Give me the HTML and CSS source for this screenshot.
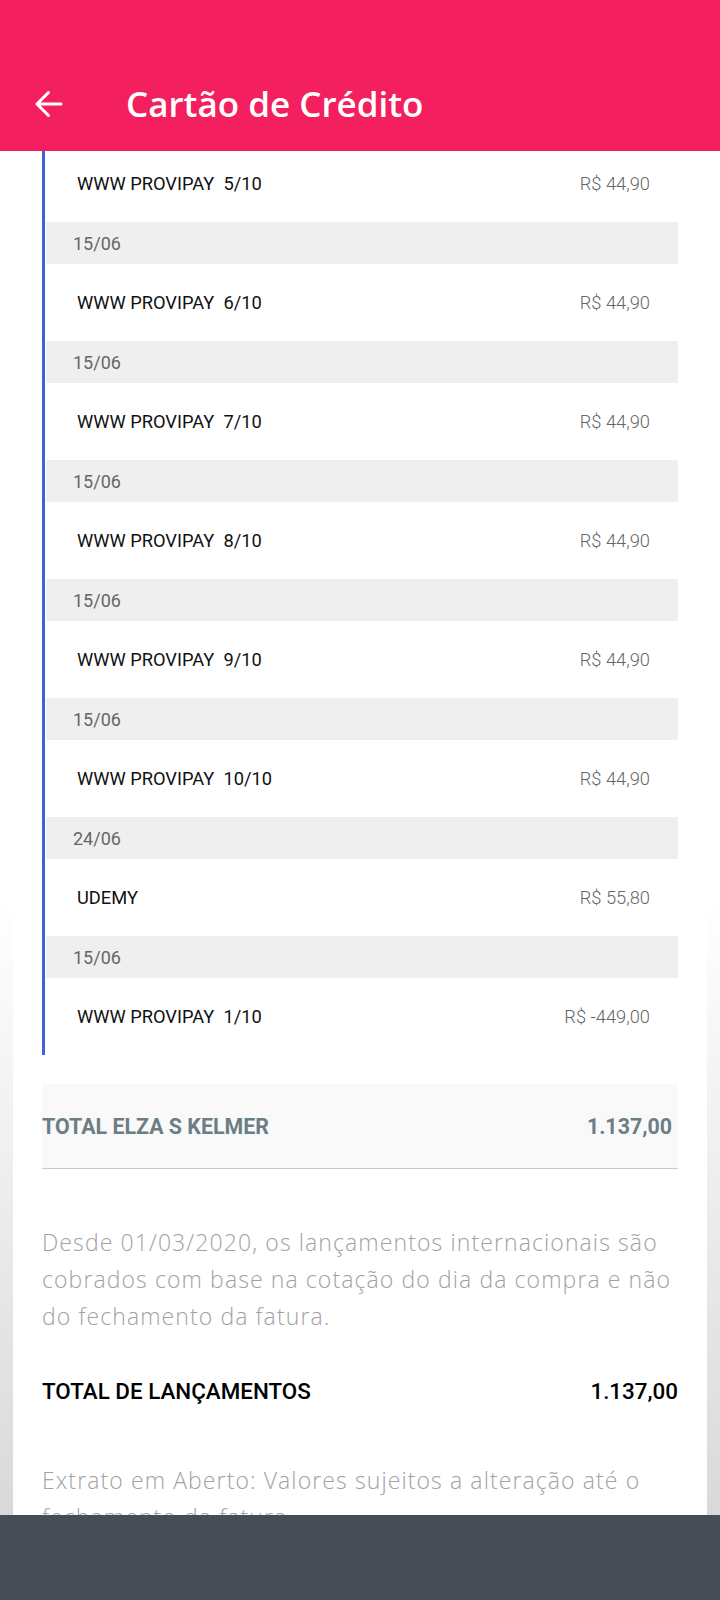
FILE: index.html
```html
<!DOCTYPE html>
<html lang="pt-BR">
<head>
<meta charset="utf-8">
<title>Cartão de Crédito</title>
<link rel="stylesheet" href="styles.css">
</head>
<body>
<header class="appbar">
  <div class="toolbar">
    <svg class="back" width="30" height="30" viewBox="0 0 30 30" aria-hidden="true">
      <path d="M27 15H3M14.5 3.5L3 15l11.5 11.5" fill="none" stroke="#fff" stroke-width="3" stroke-linecap="round" stroke-linejoin="round"/>
    </svg>
    <h1 class="title">Cartão de Crédito</h1>
  </div>
</header>
<main class="card">
  <ul class="list">
    <li class="item"><span class="desc">WWW PROVIPAY  5/10</span><span class="amount">R$ 44,90</span></li>
    <li class="date">15/06</li>
    <li class="item"><span class="desc">WWW PROVIPAY  6/10</span><span class="amount">R$ 44,90</span></li>
    <li class="date">15/06</li>
    <li class="item"><span class="desc">WWW PROVIPAY  7/10</span><span class="amount">R$ 44,90</span></li>
    <li class="date">15/06</li>
    <li class="item"><span class="desc">WWW PROVIPAY  8/10</span><span class="amount">R$ 44,90</span></li>
    <li class="date">15/06</li>
    <li class="item"><span class="desc">WWW PROVIPAY  9/10</span><span class="amount">R$ 44,90</span></li>
    <li class="date">15/06</li>
    <li class="item"><span class="desc">WWW PROVIPAY  10/10</span><span class="amount">R$ 44,90</span></li>
    <li class="date">24/06</li>
    <li class="item"><span class="desc">UDEMY</span><span class="amount">R$ 55,80</span></li>
    <li class="date">15/06</li>
    <li class="item"><span class="desc">WWW PROVIPAY  1/10</span><span class="amount">R$ -449,00</span></li>
  </ul>
  <div class="holder-total">
    <span>TOTAL ELZA S KELMER</span>
    <span>1.137,00</span>
  </div>
  <p class="note">Desde 01/03/2020, os lançamentos internacionais são cobrados com base na cotação do dia da compra e não do fechamento da fatura.</p>
  <div class="grand-total">
    <span>TOTAL DE LANÇAMENTOS</span>
    <span>1.137,00</span>
  </div>
  <p class="note note-last">Extrato em Aberto: Valores sujeitos a alteração até o fechamento da fatura.</p>
</main>
<div class="navbar"></div>
</body>
</html>
```

FILE: styles.css
```css
html, body {
  margin: 0;
  padding: 0;
}
body {
  min-height: 1600px;
  background: linear-gradient(to bottom, #ffffff 0, #ffffff 900px, #d9d9d9 1515px, #d9d9d9 100%);
  font-family: Roboto, "Noto Sans", sans-serif;
  overflow: hidden;
}
.appbar {
  position: relative;
  z-index: 2;
  height: 151px;
  background: #f41f5e;
  box-sizing: border-box;
  padding-top: 56px;
}
.toolbar {
  height: 95px;
  display: flex;
  align-items: center;
}
.back {
  margin-left: 34px;
  flex: none;
}
.title {
  margin: 0 0 0 62px;
  color: #fff;
  font-family: "Open Sans", sans-serif;
  font-weight: 600;
  font-size: 35px;
  letter-spacing: 0;
}
.card {
  margin: -6px 13px 0;
  background: #fff;
  padding-bottom: 80px;
}
.list {
  list-style: none;
  margin: 0 29px 0 29px;
  padding: 0;
  border-left: 3px solid #3d62dc;
}
.item {
  height: 77px;
  display: flex;
  align-items: center;
  justify-content: space-between;
  padding: 0 28px 0 31px;
  margin-left: 1px;
}
.desc {
  white-space: pre;
  font-size: 18.3px;
  color: #111;
}
.amount {
  font-size: 18.3px;
  font-weight: 300;
  color: #666;
}
.date {
  height: 42px;
  display: flex;
  align-items: center;
  background: #efefef;
  padding-left: 27px;
  margin-left: 1px;
  font-size: 18px;
  color: #666;
}
.holder-total {
  margin: 29px 29px 0;
  height: 84px;
  background: #f9f9f9;
  border-bottom: 1px solid #c8c8c8;
  display: flex;
  align-items: center;
  justify-content: space-between;
  padding-right: 6px;
  font-weight: 700;
  font-size: 21.4px;
  color: #6b7e86;
}
.note {
  margin: 55px 29px 0;
  font-family: "Open Sans", sans-serif;
  font-weight: 300;
  font-size: 23px;
  letter-spacing: 1.1px;
  line-height: 37px;
  color: #a2a2a2;
}
.grand-total {
  margin: 41px 29px 0;
  height: 30px;
  display: flex;
  align-items: center;
  justify-content: space-between;
  font-weight: 500;
  font-size: 22.4px;
  color: #000;
}
.note-last {
  margin-top: 56px;
}
.navbar {
  position: fixed;
  left: 0;
  right: 0;
  bottom: 0;
  height: 85px;
  background: #464d55;
  z-index: 3;
}
```
